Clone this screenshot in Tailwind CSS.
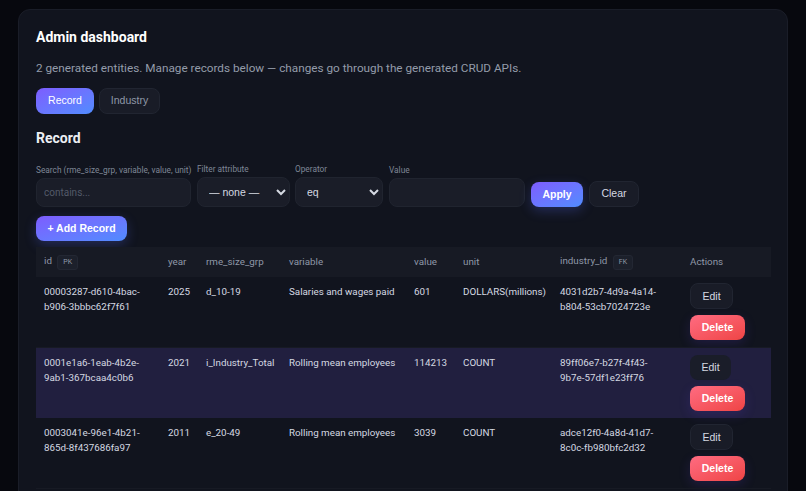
<!DOCTYPE html>
<html lang="en">
<head>
    <meta charset="UTF-8">
    <title>Admin dashboard</title>
    <script src="https://cdn.jsdelivr.net/npm/@tailwindcss/browser@4"></script>
</head>
<body class="bg-[#07080e] h-[491px] overflow-hidden [font-family:Roboto,sans-serif] text-[#d5d9e2]">
    <div class="mx-[18px] mt-[9px] px-[17px] pt-[17px] h-[520px] bg-[#11141e] border border-[#1a1d28] rounded-xl">
        <h1 class="text-[14px] leading-5 font-bold text-white">Admin dashboard</h1>
        <p class="mt-[11px] text-[11.75px] leading-5 text-[#949caa]">2 generated entities. Manage records below — changes go through the generated CRUD APIs.</p>

        <div class="mt-[10px] flex gap-[5px] [font-family:'Liberation_Sans',sans-serif] text-[10.5px]">
            <button class="w-[58px] h-[26px] rounded-lg text-white bg-gradient-to-br from-[#7c5cff] to-[#4f8cff]">Record</button>
            <button class="w-[61px] h-[26px] rounded-lg text-[#8f98a8] bg-[#191c27] border border-[#212531]">Industry</button>
        </div>

        <h2 class="mt-[14px] text-[14px] leading-5 font-bold text-[#eceef3]">Record</h2>

        <div class="mt-[15px] flex items-end text-[#7f8796]">
            <label class="w-[155px] mr-[6px] block">
                <span class="block mb-[2px] text-[8.3px] leading-3 whitespace-nowrap">Search (rme_size_grp, variable, value, unit)</span>
                <input placeholder="contains..." class="w-full h-[29px] px-[7px] rounded-lg bg-[#1a1d28] border border-[#20242f] text-[10px] placeholder:text-[#535a69]">
            </label>
            <label class="w-[93px] mr-[5px] block">
                <span class="block mb-[2px] text-[8.3px] leading-3">Filter attribute</span>
                <select class="w-full h-[30px] px-[7px] rounded-lg bg-[#1a1d28] border border-[#20242f] text-[10.5px] text-[#d5d9e2] [font-family:'Liberation_Sans',sans-serif]">
                    <option>— none —</option>
                </select>
            </label>
            <label class="w-[88px] mr-[6px] block">
                <span class="block mb-[2px] text-[8.3px] leading-3">Operator</span>
                <select class="w-full h-[30px] px-[7px] rounded-lg bg-[#1a1d28] border border-[#20242f] text-[10.5px] text-[#d5d9e2] [font-family:'Liberation_Sans',sans-serif]">
                    <option>eq</option>
                </select>
            </label>
            <label class="w-[136px] mr-[6px] block">
                <span class="block mb-[2px] text-[8.3px] leading-3">Value</span>
                <input class="w-full h-[29px] rounded-lg bg-[#1a1d28] border border-[#20242f]">
            </label>
            <button class="w-[52px] h-[25px] mr-[6px] rounded-lg [font-family:'Liberation_Sans',sans-serif] text-[10.5px] font-bold text-white bg-gradient-to-br from-[#7c5cff] to-[#4f8cff] shadow-[0_4px_12px_rgba(92,110,255,0.25)]">Apply</button>
            <button class="w-[50px] h-[26px] rounded-lg [font-family:'Liberation_Sans',sans-serif] text-[10.5px] text-[#d5d9e2] bg-[#191c27] border border-[#212531]">Clear</button>
        </div>

        <button class="mt-[9px] block w-[91px] h-[25px] rounded-lg [font-family:'Liberation_Sans',sans-serif] text-[10.5px] font-bold text-white bg-gradient-to-br from-[#7c5cff] to-[#4f8cff] shadow-[0_4px_12px_rgba(92,110,255,0.25)]">+ Add Record</button>

        <table class="mt-[6px] w-[735px] table-fixed border-collapse text-[9.8px] leading-[15px]">
            <colgroup>
                <col class="w-[124px]"><col class="w-[38px]"><col class="w-[83px]"><col class="w-[125px]"><col class="w-[49px]"><col class="w-[97px]"><col class="w-[130px]"><col class="w-[89px]">
            </colgroup>
            <thead>
                <tr class="h-[30px] bg-[#171a24] text-left text-[#8f98a8]">
                    <th class="pl-2 pb-[2px] font-normal">id <span class="ml-[3px] inline-block px-[5px] text-[7px] leading-[13px] rounded-[3px] bg-[#1c202b] border border-[#232733]">PK</span></th>
                    <th class="pl-2 pb-[2px] font-normal">year</th>
                    <th class="pl-2 pb-[2px] font-normal">rme_size_grp</th>
                    <th class="pl-2 pb-[2px] font-normal">variable</th>
                    <th class="pl-2 pb-[2px] font-normal">value</th>
                    <th class="pl-2 pb-[2px] font-normal">unit</th>
                    <th class="pl-2 pb-[2px] font-normal">industry_id <span class="ml-[3px] inline-block px-[5px] text-[7px] leading-[13px] rounded-[3px] bg-[#1c202b] border border-[#232733]">FK</span></th>
                    <th class="pl-2 pb-[2px] font-normal">Actions</th>
                </tr>
            </thead>
            <tbody>
                <tr class="h-[70px] align-top border-b border-[#171a24]">
                    <td class="pl-2 pr-[18px] pt-[7px]">00003287-d610-4bac-b906-3bbbc62f7f61</td>
                    <td class="pl-2 pt-[7px]">2025</td>
                    <td class="pl-2 pt-[7px]">d_10-19</td>
                    <td class="pl-2 pt-[7px]">Salaries and wages paid</td>
                    <td class="pl-2 pt-[7px]">601</td>
                    <td class="pl-2 pt-[7px] whitespace-nowrap">DOLLARS(millions)</td>
                    <td class="pl-2 pr-[18px] pt-[7px]">4031d2b7-4d9a-4a14-b804-53cb7024723e</td>
                    <td class="pl-2 pt-[6px]">
                        <button class="block w-[43px] h-[26px] rounded-lg [font-family:'Liberation_Sans',sans-serif] text-[10.5px] text-[#d5d9e2] bg-[#191c27] border border-[#212531]">Edit</button>
                        <button class="block mt-[6px] w-[55px] h-[25px] rounded-lg [font-family:'Liberation_Sans',sans-serif] text-[10.5px] font-bold text-white bg-gradient-to-br from-[#ff6b81] to-[#ef4444] shadow-[0_4px_12px_rgba(92,60,200,0.2)]">Delete</button>
                    </td>
                </tr>
                <tr class="h-[71px] align-top bg-[#211f3f]">
                    <td class="pl-2 pr-[18px] pt-[7px]">0001e1a6-1eab-4b2e-9ab1-367bcaa4c0b6</td>
                    <td class="pl-2 pt-[7px]">2021</td>
                    <td class="pl-2 pt-[7px]">i_Industry_Total</td>
                    <td class="pl-2 pt-[7px]">Rolling mean employees</td>
                    <td class="pl-2 pt-[7px]">114213</td>
                    <td class="pl-2 pt-[7px]">COUNT</td>
                    <td class="pl-2 pr-[18px] pt-[7px]">89ff06e7-b27f-4f43-9b7e-57df1e23ff76</td>
                    <td class="pl-2 pt-[7px]">
                        <button class="block w-[41px] h-[25px] rounded-lg [font-family:'Liberation_Sans',sans-serif] text-[10.5px] text-[#d5d9e2] bg-[#1a1d29]">Edit</button>
                        <button class="block mt-[6px] w-[55px] h-[25px] rounded-lg [font-family:'Liberation_Sans',sans-serif] text-[10.5px] font-bold text-white bg-gradient-to-br from-[#ff6b81] to-[#ef4444] shadow-[0_4px_12px_rgba(92,60,200,0.2)]">Delete</button>
                    </td>
                </tr>
                <tr class="h-[70px] align-top border-b border-[#171a24]">
                    <td class="pl-2 pr-[18px] pt-[7px]">0003041e-96e1-4b21-865d-8f437686fa97</td>
                    <td class="pl-2 pt-[7px]">2011</td>
                    <td class="pl-2 pt-[7px]">e_20-49</td>
                    <td class="pl-2 pt-[7px]">Rolling mean employees</td>
                    <td class="pl-2 pt-[7px]">3039</td>
                    <td class="pl-2 pt-[7px]">COUNT</td>
                    <td class="pl-2 pr-[18px] pt-[7px]">adce12f0-4a8d-41d7-8c0c-fb980bfc2d32</td>
                    <td class="pl-2 pt-[6px]">
                        <button class="block w-[43px] h-[26px] rounded-lg [font-family:'Liberation_Sans',sans-serif] text-[10.5px] text-[#d5d9e2] bg-[#191c27] border border-[#212531]">Edit</button>
                        <button class="block mt-[6px] w-[55px] h-[25px] rounded-lg [font-family:'Liberation_Sans',sans-serif] text-[10.5px] font-bold text-white bg-gradient-to-br from-[#ff6b81] to-[#ef4444] shadow-[0_4px_12px_rgba(92,60,200,0.2)]">Delete</button>
                    </td>
                </tr>
            </tbody>
        </table>
    </div>
</body>
</html>
